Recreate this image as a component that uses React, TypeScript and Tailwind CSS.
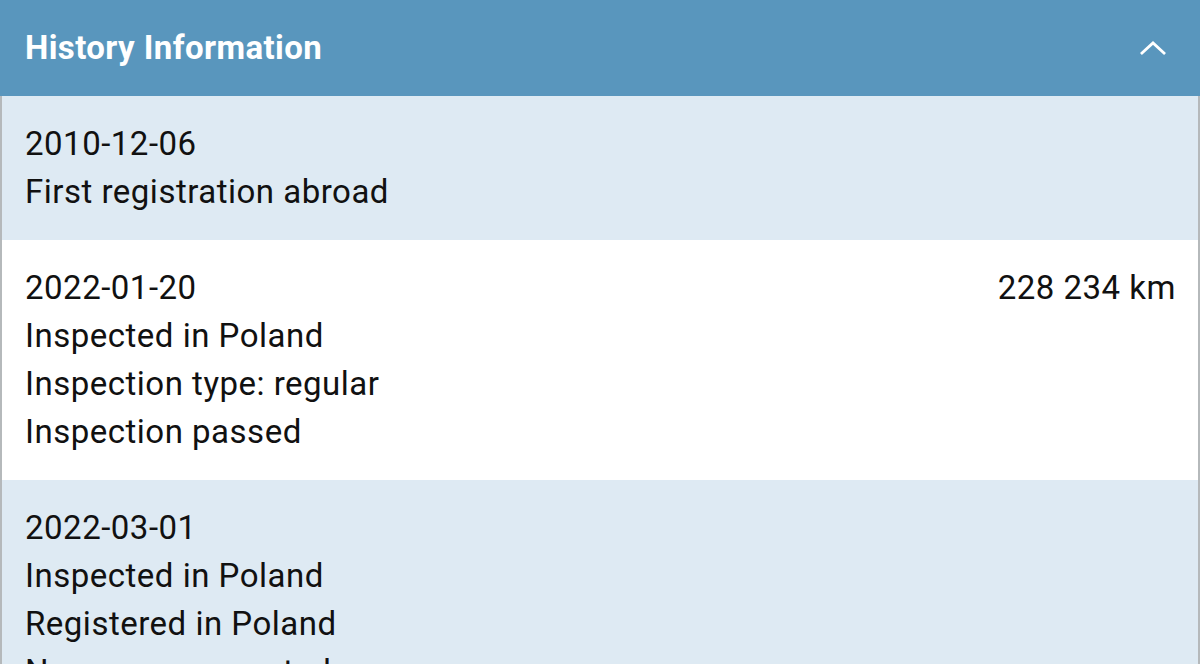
const ROWS = [
  { date: "2010-12-06", lines: ["First registration abroad"], km: "" },
  {
    date: "2022-01-20",
    lines: ["Inspected in Poland", "Inspection type: regular", "Inspection passed"],
    km: "228 234 km",
  },
  {
    date: "2022-03-01",
    lines: ["Inspected in Poland", "Registered in Poland", "New owner reported"],
    km: "",
  },
];

export default function App() {
  return (
    <div className="h-[664px] w-[1200px] overflow-hidden bg-white font-['Roboto',sans-serif]">
      <div className="flex h-[96px] items-center justify-between bg-[#5996bd] pl-[25px] pr-[34px]">
        <h2 className="text-[33px] font-bold tracking-[0.4px] text-white">History Information</h2>
        <svg width="26" height="16" viewBox="0 0 26 16" fill="none">
          <path d="M2 13 L13 3 L24 13" stroke="white" strokeWidth="2.8" strokeLinecap="square" />
        </svg>
      </div>
      <div className="border-x-2 border-[#b5b9bb]">
        {ROWS.map((row, i) => (
          <div
            key={row.date}
            className={`flex justify-between py-[24px] pl-[23px] pr-[22px] text-[33px] leading-[48px] tracking-[0.5px] text-[#111] ${
              i % 2 === 0 ? "bg-[#deeaf3]" : "bg-white"
            }`}
          >
            <div>
              <p>{row.date}</p>
              {row.lines.map((l) => (
                <p key={l}>{l}</p>
              ))}
            </div>
            {row.km && <p>{row.km}</p>}
          </div>
        ))}
      </div>
    </div>
  );
}
